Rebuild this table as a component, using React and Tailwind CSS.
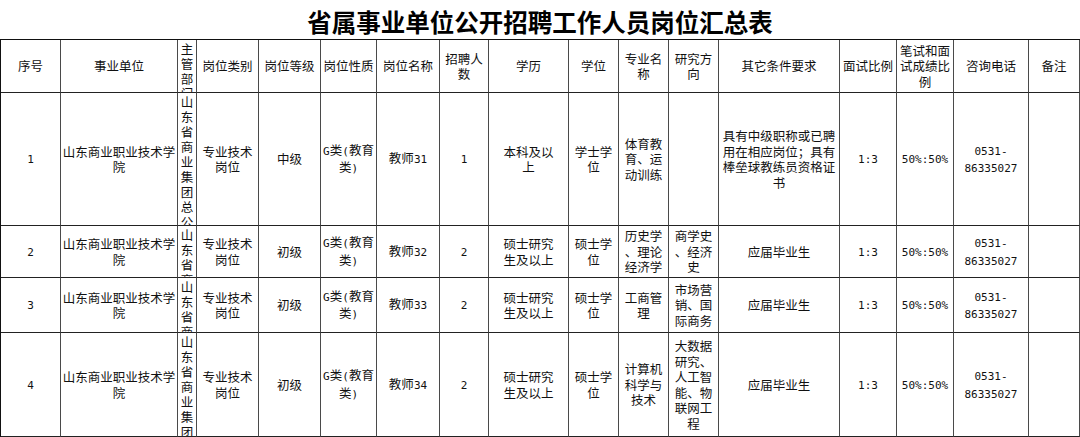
import React, { Fragment } from "react";

const isAscii = (p) => /^[\x00-\x7F]+$/.test(p);

function Txt({ s }) {
  return s.split("\n").map((line, i) => (
    <Fragment key={i}>
      {i > 0 && <br />}
      {line
        .split(/([\x00-\x7F]+)/)
        .filter((p) => p.length > 0)
        .map((p, j) =>
          isAscii(p) ? (
            <span key={j} className="font-['DejaVu_Sans_Mono',monospace] text-[11px]">
              {p}
            </span>
          ) : (
            <Fragment key={j}>{p}</Fragment>
          )
        )}
    </Fragment>
  ));
}

function Cell({ s }) {
  return (
    <div className="flex items-center justify-center overflow-hidden border-r border-b border-r-[#4a4a4a] border-b-[#222] px-[1px] text-center leading-[15.5px]">
      <div>
        <Txt s={s} />
      </div>
    </div>
  );
}

function VCell({ s }) {
  return (
    <div className="flex flex-col items-center justify-start overflow-hidden border-r border-b border-r-[#4a4a4a] border-b-[#222] pt-[1px] leading-[15px]">
      {s.split("").map((c, i) => (
        <div key={i}>{c}</div>
      ))}
    </div>
  );
}

const header = [
  "序号",
  "事业单位",
  null,
  "岗位类别",
  "岗位等级",
  "岗位性质",
  "岗位名称",
  "招聘人\n数",
  "学历",
  "学位",
  "专业名\n称",
  "研究方\n向",
  "其它条件要求",
  "面试比例",
  "笔试和面\n试成绩比\n例",
  "咨询电话",
  "备注",
];

const unit = "山东商业职业技术学\n院";
const dept = "山东省商业集团总公司";

const rows = [
  [
    "1",
    unit,
    null,
    "专业技术\n岗位",
    "中级",
    "G类(教育\n类)",
    "教师31",
    "1",
    "本科及以\n上",
    "学士学\n位",
    "体育教\n育、运\n动训练",
    "",
    "具有中级职称或已聘\n用在相应岗位；具有\n棒垒球教练员资格证\n书",
    "1:3",
    "50%:50%",
    "0531-\n86335027",
    "",
  ],
  [
    "2",
    unit,
    null,
    "专业技术\n岗位",
    "初级",
    "G类(教育\n类)",
    "教师32",
    "2",
    "硕士研究\n生及以上",
    "硕士学\n位",
    "历史学\n、理论\n经济学",
    "商学史\n、经济\n史",
    "应届毕业生",
    "1:3",
    "50%:50%",
    "0531-\n86335027",
    "",
  ],
  [
    "3",
    unit,
    null,
    "专业技术\n岗位",
    "初级",
    "G类(教育\n类)",
    "教师33",
    "2",
    "硕士研究\n生及以上",
    "硕士学\n位",
    "工商管\n理",
    "市场营\n销、国\n际商务",
    "应届毕业生",
    "1:3",
    "50%:50%",
    "0531-\n86335027",
    "",
  ],
  [
    "4",
    unit,
    null,
    "专业技术\n岗位",
    "初级",
    "G类(教育\n类)",
    "教师34",
    "2",
    "硕士研究\n生及以上",
    "硕士学\n位",
    "计算机\n科学与\n技术",
    "大数据\n研究、\n人工智\n能、物\n联网工\n程",
    "应届毕业生",
    "1:3",
    "50%:50%",
    "0531-\n86335027",
    "",
  ],
];

export default function App() {
  return (
    <div className="h-[437px] w-[1080px] overflow-hidden bg-white font-['Noto_Sans_CJK_SC',sans-serif] text-[#111]">
      <div className="h-[39px] pt-[7px] text-center text-[24.5px] font-bold leading-[30px] text-black">
        省属事业单位公开招聘工作人员岗位汇总表
      </div>
      <div className="grid grid-cols-[60px_117px_19px_62px_62px_56px_63px_49px_80px_50px_50px_50px_121px_57px_57px_75px_51px] grid-rows-[53px_133px_52px_55px_104px] border-t border-l border-t-[#111] border-l-[#111] text-[12.5px]">
        {header.map((h, i) =>
          h === null ? <VCell key={i} s="主管部门" /> : <Cell key={i} s={h} />
        )}
        {rows.map((r, ri) =>
          r.map((c, ci) =>
            c === null ? <VCell key={ri + "-" + ci} s={dept} /> : <Cell key={ri + "-" + ci} s={c} />
          )
        )}
      </div>
    </div>
  );
}
